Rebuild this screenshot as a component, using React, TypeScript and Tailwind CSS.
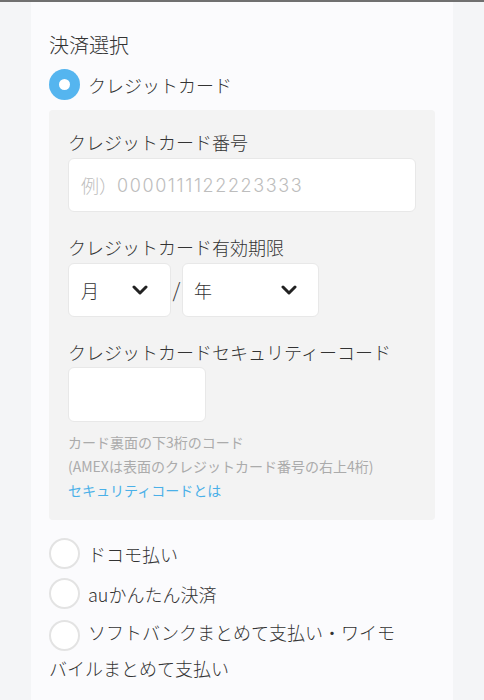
import React from "react";

const font = { fontFamily: '"Noto Sans CJK JP", "Noto Sans", sans-serif' };

function Chevron() {
  return (
    <svg width="16" height="10" viewBox="0 0 16 10" fill="none">
      <path d="M2 2 L8 8 L14 2" stroke="#222" strokeWidth="3" strokeLinecap="round" strokeLinejoin="round" />
    </svg>
  );
}

function Radio({ checked }: { checked?: boolean }) {
  if (checked) {
    return (
      <span className="inline-flex h-[31px] w-[31px] shrink-0 items-center justify-center rounded-full bg-[#55b5ef] align-middle">
        <span className="h-[11px] w-[11px] rounded-full bg-white" />
      </span>
    );
  }
  return <span className="inline-block h-[31px] w-[31px] shrink-0 rounded-full border-2 border-[#e3e3e3] bg-white align-middle" />;
}

export default function App() {
  return (
    <div className="min-h-[700px] bg-[#f4f5f7] font-light text-[#333]" style={font}>
      <div className="h-[2px] bg-[#707070]" />
      <div className="mx-[31px] min-h-[698px] bg-[#fbfbfd] px-[18px] pt-[29px]">
        <h2 className="text-[20px] leading-[28px]">決済選択</h2>

        <div className="mt-[10px] flex items-center gap-[8px]">
          <Radio checked />
          <span className="text-[18px] leading-[26px]">クレジットカード</span>
        </div>

        <div className="mt-[10px] rounded bg-[#f3f3f3] px-[19px] pb-[18px] pt-[19px]">
          <p className="mb-[3px] text-[18px] leading-[26px]">クレジットカード番号</p>
          <div className="flex h-[54px] w-[348px] items-center rounded-md border border-[#e8e8e8] bg-white px-[12px] text-[18px] text-[#bdbdbd]">
            <span>例）</span>
            <span style={{ fontFamily: "Inter, sans-serif" }} className="font-light tracking-[1.6px]">
              0000111122223333
            </span>
          </div>

          <p className="mb-[3px] mt-[22px] text-[18px] leading-[26px]">クレジットカード有効期限</p>
          <div className="flex items-center">
            <div className="flex h-[54px] w-[103px] items-center justify-between rounded-md border border-[#e8e8e8] bg-white pl-[12px] pr-[22px] text-[18px]">
              <span>月</span>
              <Chevron />
            </div>
            <span className="w-[11px] text-center text-[20px]">/</span>
            <div className="flex h-[54px] w-[137px] items-center justify-between rounded-md border border-[#e8e8e8] bg-white pl-[11px] pr-[21px] text-[18px]">
              <span>年</span>
              <Chevron />
            </div>
          </div>

          <p className="mb-[2px] mt-[22px] text-[18px] leading-[26px]">クレジットカードセキュリティーコード</p>
          <div className="h-[55px] w-[138px] rounded-md border border-[#e8e8e8] bg-white" />

          <div className="mt-[8px] text-[14px] font-normal leading-[24px] text-[#ababab]">
            <p>カード裏面の下3桁のコード</p>
            <p>(AMEXは表面のクレジットカード番号の右上4桁)</p>
            <a className="text-[#4ab0e8]" href="#">
              セキュリティコードとは
            </a>
          </div>
        </div>

        <div className="mt-[18px] flex flex-col gap-[9px]">
          <div className="flex items-center gap-[8px]">
            <Radio />
            <span className="text-[18px] leading-[26px]">ドコモ払い</span>
          </div>
          <div className="flex items-center gap-[8px]">
            <Radio />
            <span className="text-[18px] leading-[26px]">auかんたん決済</span>
          </div>
          <p className="-mt-[3px] w-[360px] text-[18px] leading-[34px]">
            <Radio />
            <span className="ml-[8px]">ソフトバンクまとめて支払い・ワイモバイルまとめて支払い</span>
          </p>
        </div>
      </div>
    </div>
  );
}
